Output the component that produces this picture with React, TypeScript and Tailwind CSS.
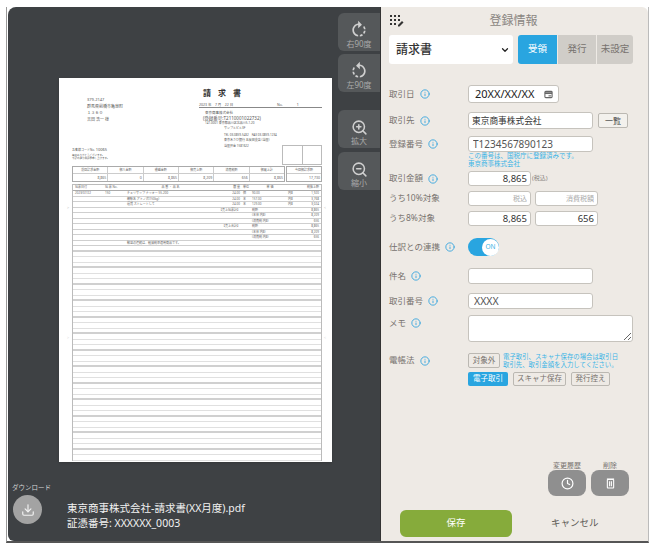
import { ReactNode } from "react"
import { ChevronDown, Clock, Download, Info, ZoomIn, ZoomOut } from "lucide-react"

const ROTATE_PATH =
  "M15.55 5.55L11 1v3.07C7.06 4.56 4 7.92 4 12s3.05 7.44 7 7.93v-2.02c-2.84-.48-5-2.94-5-5.91s2.16-5.43 5-5.91V10l4.55-4.45zM19.93 11c-.17-1.39-.72-2.73-1.62-3.89l-1.42 1.42c.54.75.88 1.6 1.02 2.47h2.02zM13 17.9v2.02c1.39-.17 2.74-.71 3.9-1.61l-1.44-1.44c-.75.54-1.59.89-2.46 1.03zm3.89-2.42l1.42 1.41c.9-1.16 1.45-2.5 1.62-3.89h-2.02c-.14.87-.48 1.72-1.02 2.48z"

function RotateIcon({ left }: { left?: boolean }) {
  return (
    <svg viewBox="0 0 24 24" className={left ? "h-[20px] w-[20px] -scale-x-100" : "h-[20px] w-[20px]"} fill="#cfcfcf">
      <path d={ROTATE_PATH} />
    </svg>
  )
}

function ToolButton({ label, icon, className = "" }: { label: string; icon: ReactNode; className?: string }) {
  return (
    <div className={`flex h-[38px] w-[42px] flex-col items-center rounded-l-md bg-[#55585a] pt-[7px] text-[8px] leading-[10px] text-[#a9a9a9] ${className}`}>
      <div className="flex h-[20px] items-center">{icon}</div>
      <span className="-mt-[1px]">{label}</span>
    </div>
  )
}

const summary = [
  ["前回請求金額", "8,865"],
  ["御入金額", "0"],
  ["繰越金額", "8,865"],
  ["御売上額", "8,209"],
  ["消費税額", "656"],
  ["御買上計", "8,865"],
]

const lines = [
  ["2023/07/22", "150", "チェリサップ ナッキー 55-200", "24.00", "個", "90.00", "内8", "1,920"],
  ["", "", "網駅名 アミノ式(150kg)", "24.00", "本", "157.00", "内8", "3,768"],
  ["", "", "運賃 ストレートして", "24.00", "本", "129.00", "内8", "3,024"],
  ["", "", "", "【売上伝票計】", "", "税額", "", "8,865"],
  ["", "", "", "", "", "(本体 内8)", "", "8,209"],
  ["", "", "", "", "", "(消費税 内8)", "", "656"],
  ["", "", "", "【売上合計】", "", "税額", "", "8,865"],
  ["", "", "", "", "", "(本体 内8)", "", "8,209"],
  ["", "", "", "", "", "(消費税 内8)", "", "656"],
  ["", "", "輸送の連続は、軽減税率適用商品です。", "", "", "", "", ""],
]

const emptyRows = Array.from({ length: 39 }, (_, i) => i)

function InvoiceRow({ cells }: { cells: string[] }) {
  return (
    <div className="grid h-[5.5px] grid-cols-[30px_22px_87px_26px_12px_36px_13px_1fr] border-b border-[#cfcfcf] px-[2px] text-[3px] leading-[5px] text-[#666]">
      <span className="whitespace-nowrap">{cells[0]}</span>
      <span>{cells[1]}</span>
      <span className="whitespace-nowrap">{cells[2]}</span>
      <span className="whitespace-nowrap text-right">{cells[3]}</span>
      <span className="pl-[3px]">{cells[4]}</span>
      <span className="whitespace-nowrap">{cells[5]}</span>
      <span>{cells[6]}</span>
      <span className="text-right">{cells[7]}</span>
    </div>
  )
}

function InvoicePage() {
  return (
    <div className="relative ml-[51px] mt-[71px] h-[384px] w-[273px] bg-white pb-[7px] pl-[13px] pr-[10px] shadow-sm">
      <span className="absolute left-[8px] top-[127px] text-[4px] text-[#aaa]">&gt;</span>
      <span className="absolute right-[6px] top-[127px] text-[4px] text-[#aaa]">&lt;</span>
      <span className="absolute left-[8px] top-[257px] text-[4px] text-[#ccc]">&gt;</span>
      <span className="absolute right-[6px] top-[257px] text-[4px] text-[#ccc]">&lt;</span>

      <div className="flex h-[88px] text-[#555]">
        <div className="w-[127px] shrink-0">
          <div className="ml-[15px] mt-[19px] text-[4px] leading-[6.5px]">
            <p>379-2147</p>
            <p>群馬県前橋市亀泉町</p>
            <p>１３６０</p>
            <p>吉田 浩一 様</p>
          </div>
          <p className="mt-[24px] text-[3px] leading-[5px]">
            お客様コードNo. <span className="text-[4px]">10065</span>
          </p>
          <p className="mt-[1px] text-[2.5px] leading-[3px]">毎度ありがとうございます。</p>
          <p className="text-[2.5px] leading-[3px]">下記の通り御請求申し上げます。</p>
        </div>
        <div className="relative flex-1">
          <p className="mt-[10px] pl-[4px] text-[8px] font-bold leading-[10px] tracking-[7px] text-[#333]">請求書</p>
          <div className="mt-[4px] flex h-[6px] border-b border-[#888] text-[3.5px] leading-[5px]">
            <span className="w-[78px]">2023 年　7 月　22 日</span>
            <span>No.　　　　1</span>
          </div>
          <p className="mt-[2px] pl-[6px] text-[3.5px] leading-[5px]">東京商事株式会社</p>
          <p className="pl-[4px] text-[4.5px] leading-[6px]">(登録番号:T2110001022732)</p>
          <p className="whitespace-nowrap pl-[6px] text-[3px] leading-[5px]">141-0001 東京都品川区北品川5-1-20</p>
          <p className="pl-[25px] text-[3px] leading-[5px]">サンプルビル3F</p>
          <p className="mt-[2px] whitespace-nowrap pl-[25px] text-[3px] leading-[5px]">TEL 03-0859-5432　FAX 03-0859-1234</p>
          <p className="whitespace-nowrap pl-[25px] text-[3px] leading-[5px]">東京あさひ銀行 五反田支店 (当座)</p>
          <p className="mt-[1px] pl-[25px] text-[3px] leading-[5px]">当座預金 1581622</p>
          <div className="absolute bottom-[1px] right-0 flex h-[20px] w-[40px] border border-[#bbb]">
            <div className="flex-1 border-r border-[#bbb]" />
            <div className="flex-1" />
          </div>
        </div>
      </div>

      <div className="flex h-[16px] gap-[1px] text-[3px] text-[#666]">
        <div className="flex flex-1 border border-[#aaa]">
          {summary.map(([head, value]) => (
            <div key={head} className="flex-1 border-r border-[#ccc] last:border-r-0">
              <p className="h-[6.5px] border-b border-[#ccc] text-center leading-[6px]">{head}</p>
              <p className="pr-[1px] text-right text-[3.5px] leading-[8px]">{value}</p>
            </div>
          ))}
        </div>
        <div className="w-[36px] border border-[#aaa]">
          <p className="h-[6.5px] border-b border-[#ccc] text-center leading-[6px]">今回御請求額</p>
          <p className="pr-[1px] text-right text-[3.5px] leading-[8px]">17,730</p>
        </div>
      </div>

      <div className="mt-[2px] border-x border-t border-[#bbb]">
        <div className="grid h-[6px] grid-cols-[30px_22px_87px_26px_12px_36px_13px_1fr] border-b border-[#aaa] px-[2px] text-[3px] leading-[5px] text-[#666]">
          <span>伝票日付</span>
          <span>伝 票 No.</span>
          <span className="text-center">品 番 ・ 品 名</span>
          <span className="text-right">数 量</span>
          <span className="pl-[3px]">単位</span>
          <span className="text-center">単 価</span>
          <span />
          <span className="text-right">税抜上額</span>
        </div>
        {lines.map((cells, i) => (
          <InvoiceRow key={i} cells={cells} />
        ))}
        {emptyRows.map((i) => (
          <div key={i} className={i % 3 === 0 ? "h-[5.5px] border-b-2 border-[#d0d0d0]" : "h-[5.5px] border-b border-[#e0e0e0]"} />
        ))}
      </div>
    </div>
  )
}

function ViewerPanel() {
  return (
    <div className="flex h-[534px] w-[373px] shrink-0 flex-col rounded-tl-lg rounded-bl-md border-r border-[#333] bg-[#3e4144]">
      <div className="flex flex-1">
        <InvoicePage />
        <div className="ml-auto flex flex-col pt-[6px]">
          <ToolButton label="右90度" icon={<RotateIcon />} />
          <ToolButton label="左90度" icon={<RotateIcon left />} className="mt-[3px]" />
          <ToolButton label="拡大" icon={<ZoomIn size={17} color="#cfcfcf" strokeWidth={2.2} />} className="mt-[18px]" />
          <ToolButton label="縮小" icon={<ZoomOut size={17} color="#cfcfcf" strokeWidth={2.2} />} className="mt-[4px]" />
        </div>
      </div>
      <div className="flex h-[58px] pl-[4px]">
        <div className="flex w-[54px] flex-col">
          <span className="whitespace-nowrap text-[6.5px] leading-[10px] text-[#d5d5d5]">ダウンロード</span>
          <div className="ml-[1px] mt-[2px] flex h-[29px] w-[29px] items-center justify-center rounded-full bg-[#a3a3a3]">
            <Download size={14} color="#f2f2f2" strokeWidth={2} />
          </div>
        </div>
        <div className="ml-[1px] mt-[18px] text-[10.5px] leading-[15px] text-[#f2f2f2]">
          <p>東京商事株式会社-請求書(XX月度).pdf</p>
          <p>証憑番号: XXXXXX_0003</p>
        </div>
      </div>
    </div>
  )
}

function FieldLabel({ text, className = "" }: { text: string; className?: string }) {
  return (
    <div className={`flex w-[79px] shrink-0 items-center gap-[5px] text-[8.5px] text-[#77726e] ${className}`}>
      <span className="whitespace-nowrap">{text}</span>
      <Info size={10} color="#3aa6de" strokeWidth={2.2} />
    </div>
  )
}

function Field({ value, className = "", placeholder }: { value?: string; className?: string; placeholder?: string }) {
  return (
    <input
      readOnly
      value={value ?? ""}
      placeholder={placeholder}
      className={`rounded-[3px] border border-[#c6c3bd] bg-white px-[3px] text-[#333] outline-none placeholder:text-[#aaa] ${className}`}
    />
  )
}

function Chip({ label, active, className = "" }: { label: string; active?: boolean; className?: string }) {
  return (
    <span
      className={
        active
          ? `flex h-[14px] items-center justify-center rounded-[2px] bg-[#29a5e0] text-[7.5px] text-white ${className}`
          : `flex h-[14px] items-center justify-center rounded-[2px] border border-[#bbb8b2] text-[7.5px] text-[#77726e] ${className}`
      }
    >
      {label}
    </span>
  )
}

function FormPanel() {
  return (
    <div className="flex h-[534px] w-[267px] flex-col rounded-tr-md bg-[#eeeae5] pl-[8px]">
      <div className="relative h-[28px] pt-[5px] text-center text-[12px] leading-[18px] text-[#8a8682]">
        <svg viewBox="0 0 14 12" className="absolute left-[1px] top-[8px] h-[12px] w-[14px]" fill="#333">
          <rect x="0" y="0" width="2" height="2" />
          <rect x="4" y="0" width="2" height="2" />
          <rect x="8" y="0" width="2" height="2" />
          <rect x="0" y="4" width="2" height="2" />
          <rect x="4" y="4" width="2" height="2" />
          <rect x="8" y="4" width="2" height="2" />
          <rect x="0" y="8" width="2" height="2" />
          <rect x="4" y="8" width="2" height="2" />
          <path d="M8 10l4-4 1.500 1.500-4 4H8z" />
        </svg>
        <span className="pr-[10px]">登録情報</span>
      </div>

      <div className="flex h-[29px]">
        <div className="flex w-[124px] items-center justify-between rounded-[3px] bg-white pl-[7px] pr-[3px] text-[12px] font-medium text-[#333]">
          <span>請求書</span>
          <ChevronDown size={10} color="#222" strokeWidth={3} />
        </div>
        <div className="ml-[5px] flex w-[115px] overflow-hidden rounded-[3px] text-[9.5px] text-[#77726e]">
          <span className="flex w-[39px] items-center justify-center bg-[#29a5e0] text-white">受領</span>
          <span className="ml-[1px] flex w-[38px] items-center justify-center bg-[#d0cdc8]">発行</span>
          <span className="ml-[1px] flex w-[36px] items-center justify-center bg-[#d0cdc8]">未設定</span>
        </div>
      </div>

      <div className="mt-[21px] flex h-[18px] items-center">
        <FieldLabel text="取引日" />
        <div className="flex h-[18px] w-[91px] items-center justify-between rounded-[3px] border border-[#c6c3bd] bg-white pl-[6px] pr-[5px] text-[11px] text-[#222]">
          <span>20XX/XX/XX</span>
          <svg viewBox="0 0 10 10" className="h-[9px] w-[9px] shrink-0" fill="none" stroke="#666" strokeWidth="1.200">
            <rect x="1" y="1.500" width="8" height="7" rx="1" />
            <path d="M1 3.500h8" strokeWidth="2" />
            <path d="M5 6.500h3" />
          </svg>
        </div>
      </div>

      <div className="mt-[9px] flex h-[17px] items-center">
        <FieldLabel text="取引先" />
        <Field value="東京商事株式会社" className="h-[17px] w-[125px] text-[8.700px]" />
        <span className="ml-[5px] flex h-[15px] w-[30px] items-center justify-center rounded-[2px] border border-[#bbb8b2] bg-[#f3f1ed] text-[8px] text-[#444]">一覧</span>
      </div>

      <div className="mt-[7px] flex h-[16px] items-center">
        <FieldLabel text="登録番号" />
        <Field value="T1234567890123" className="h-[16px] w-[125px] pl-[4px] text-[10px] text-[#555]" />
      </div>
      <div className="ml-[79px] text-[6.500px] leading-[8px] text-[#3ab4e6]">
        <p>この番号は、国税庁に登録済みです。</p>
        <p>東京商事株式会社</p>
      </div>

      <div className="mt-[3px] flex h-[15px] items-center">
        <FieldLabel text="取引金額" />
        <Field value="8,865" className="h-[15px] w-[63px] text-right text-[9.500px]" />
        <span className="ml-[1px] text-[6px] text-[#8a8682]">(税込)</span>
      </div>

      <div className="mt-[5px] flex h-[15px] items-center">
        <span className="w-[79px] text-[8.500px] text-[#77726e]">うち10%対象</span>
        <Field placeholder="税込" className="h-[15px] w-[63px] text-right text-[7px]" />
        <Field placeholder="消費税額" className="ml-[4px] h-[15px] w-[63px] text-right text-[7px]" />
      </div>

      <div className="mt-[5px] flex h-[15px] items-center">
        <span className="w-[79px] text-[8.500px] text-[#77726e]">うち8%対象</span>
        <Field value="8,865" className="h-[15px] w-[63px] text-right text-[9.500px]" />
        <Field value="656" className="ml-[4px] h-[15px] w-[63px] text-right text-[9.500px]" />
      </div>

      <div className="mt-[12px] flex h-[18px] items-center">
        <FieldLabel text="仕訳との連携" />
        <div className="flex h-[18px] w-[31px] items-center justify-end rounded-full bg-[#29a5e0]">
          <span className="flex h-[17px] w-[17px] items-center justify-center rounded-full bg-white text-[6.500px] text-[#3ab4e6]">ON</span>
        </div>
      </div>

      <div className="mt-[12px] flex h-[16px] items-center">
        <FieldLabel text="件名" />
        <Field className="h-[16px] w-[125px]" />
      </div>

      <div className="mt-[9px] flex h-[16px] items-center">
        <FieldLabel text="取引番号" />
        <Field value="XXXX" className="h-[16px] w-[125px] pl-[5px] text-[10.500px] text-[#555]" />
      </div>

      <div className="mt-[6px] flex h-[27px]">
        <FieldLabel text="メモ" className="h-[16px]" />
        <textarea readOnly className="h-[27px] w-[165px] rounded-[3px] border border-[#c6c3bd] bg-white outline-none" />
      </div>

      <div className="mt-[11px] flex h-[15px] items-center">
        <FieldLabel text="電帳法" />
        <span className="flex h-[15px] w-[32px] items-center justify-center rounded-[2px] border border-[#bbb8b2] text-[7.500px] text-[#77726e]">対象外</span>
        <div className="ml-[3px] whitespace-nowrap text-[6.400px] leading-[7.500px] text-[#3ab4e6]">
          <p>電子取引、スキャナ保存の場合は取引日</p>
          <p>取引先、取引金額を入力してください。</p>
        </div>
      </div>

      <div className="ml-[79px] mt-[4px] flex gap-[5px]">
        <Chip label="電子取引" active className="w-[40px]" />
        <Chip label="スキャナ保存" className="w-[53px]" />
        <Chip label="発行控え" className="w-[39px]" />
      </div>

      <div className="ml-[159px] mt-[75px] flex gap-[5px] text-center text-[7px] leading-[9px] text-[#77726e]">
        <div className="w-[38px]">
          <p className="whitespace-nowrap">変更履歴</p>
          <div className="flex h-[26px] items-center justify-center rounded-lg bg-[#8f8f8f]">
            <Clock size={13} color="#fff" strokeWidth={2.2} />
          </div>
        </div>
        <div className="w-[38px]">
          <p>削除</p>
          <div className="flex h-[26px] items-center justify-center rounded-lg bg-[#8f8f8f]">
            <svg viewBox="0 0 10 12" className="h-[11px] w-[9px]" fill="none" stroke="#fff" strokeWidth="1.200">
              <path d="M1 1h8" />
              <rect x="1.500" y="1.500" width="7" height="9.500" rx="0.500" />
              <path d="M4 3.500v5.500M6 3.500v5.500" />
            </svg>
          </div>
        </div>
      </div>

      <div className="mt-[14px] flex h-[27px] items-center text-[9.500px]">
        <div className="ml-[11px] flex h-[27px] w-[112px] items-center justify-center rounded-md bg-[#86ab3b] text-white">保存</div>
        <span className="ml-[39px] text-[#5d5a56]">キャンセル</span>
      </div>
    </div>
  )
}

export default function App() {
  return (
    <div className="h-[557px] w-[659px] overflow-hidden bg-white pl-[6px] pt-[7px] font-['Noto_Sans','Noto_Sans_CJK_JP',sans-serif]">
      <div className="flex w-[643px] border-b-2 border-l border-r border-b-[#555] border-l-[#999] border-r-[#bbb] pl-[1px]">
        <ViewerPanel />
        <FormPanel />
      </div>
    </div>
  )
}
